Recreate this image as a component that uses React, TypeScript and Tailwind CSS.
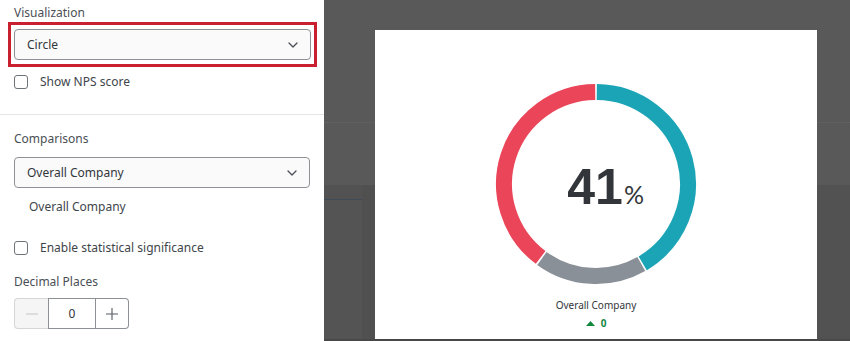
import React from "react";

const FONT = { fontFamily: '"Noto Sans", "Open Sans", Arial, sans-serif' };

function Chevron() {
  return (
    <svg width="10" height="6" viewBox="0 0 10 6" className="shrink-0">
      <path d="M1 1 L5 5 L9 1" fill="none" stroke="#4a4f55" strokeWidth="1.3" strokeLinecap="round" strokeLinejoin="round" />
    </svg>
  );
}

function Select({ value }: { value: string }) {
  return (
    <div className="flex h-[31px] items-center justify-between rounded-[4px] border border-[#8d9196] bg-[#fafafa] pl-[12px] pr-[12px]">
      <span className="text-[12px] text-[#32363a]">{value}</span>
      <Chevron />
    </div>
  );
}

function Checkbox({ label }: { label: string }) {
  return (
    <div className="flex h-[16px] items-center">
      <div className="h-[14px] w-[14px] rounded-[3px] border border-[#6e7378] bg-white" />
      <span className="ml-[12px] text-[12px] text-[#40454a]">{label}</span>
    </div>
  );
}

function arc(cx: number, cy: number, r: number, a0: number, a1: number) {
  const rad = (d: number) => (d * Math.PI) / 180;
  const x0 = cx + r * Math.sin(rad(a0));
  const y0 = cy - r * Math.cos(rad(a0));
  const x1 = cx + r * Math.sin(rad(a1));
  const y1 = cy - r * Math.cos(rad(a1));
  const large = a1 - a0 > 180 ? 1 : 0;
  return `M ${x0} ${y0} A ${r} ${r} 0 ${large} 1 ${x1} ${y1}`;
}

function Donut() {
  const cx = 110;
  const cy = 110;
  const r = 92;
  const segs = [
    { a0: 0.5, a1: 149.5, c: "#1ba4b6" },
    { a0: 150.5, a1: 216, c: "#8a9098" },
    { a0: 217, a1: 359.5, c: "#ea4559" },
  ];
  return (
    <svg width="220" height="220" viewBox="0 0 220 220">
      {segs.map((s, i) => (
        <path key={i} d={arc(cx, cy, r, s.a0, s.a1)} fill="none" stroke={s.c} strokeWidth="16" />
      ))}
      <text x={cx - 1} y={cy + 19.5} textAnchor="middle" style={{ fontFamily: '"Liberation Sans", Arial, sans-serif', fontWeight: 700, fontSize: 50 }} fill="#32363a">
        41
      </text>
      <text x={cx + 28} y={cy + 20} style={{ fontFamily: 'Lato, "Noto Sans", sans-serif', fontWeight: 400, fontSize: 25 }} fill="#32363a">
        %
      </text>
    </svg>
  );
}

export default function App() {
  return (
    <div className="flex h-[341px] w-[850px] overflow-hidden" style={FONT}>
      {/* Left panel */}
      <div className="flex h-full w-[324px] shrink-0 flex-col bg-white">
        <div className="px-[14px] pt-[4px]">
          <div className="h-[18px] text-[12px] leading-[18px] text-[#4a4f55]">Visualization</div>
        </div>
        <div className="ml-[8px] w-[309px] border-[3px] border-[#c8202f] px-[3px] py-[4px]">
          <Select value="Circle" />
        </div>
        <div className="mt-[7px] px-[14px]">
          <Checkbox label="Show NPS score" />
        </div>
        <div className="mt-[24px] h-px bg-[#e4e4e4]" />
        <div className="px-[14px]">
          <div className="mt-[15px] h-[18px] text-[12px] leading-[18px] text-[#4a4f55]">Comparisons</div>
          <div className="mt-[9px]">
            <Select value="Overall Company" />
          </div>
          <div className="mt-[10px] h-[18px] pl-[15px] text-[12px] leading-[18px] text-[#40454a]">Overall Company</div>
          <div className="mt-[24px]">
            <Checkbox label="Enable statistical significance" />
          </div>
          <div className="mt-[17px] h-[18px] text-[12px] leading-[18px] text-[#4a4f55]">Decimal Places</div>
          <div className="mt-[7px] flex h-[31px] w-[115px]">
            <div className="flex w-[34px] items-center justify-center rounded-l-[4px] border border-r-0 border-[#d6d6d6] bg-[#f5f5f5]">
              <svg width="12" height="2" viewBox="0 0 12 2"><path d="M0 1 H12" stroke="#c4c4c4" strokeWidth="1" /></svg>
            </div>
            <div className="flex w-[48px] items-center justify-center border border-[#8d9196] bg-white text-[12px] text-[#32363a]">0</div>
            <div className="flex w-[33px] items-center justify-center rounded-r-[4px] border border-l-0 border-[#8d9196] bg-white">
              <svg width="12" height="12" viewBox="0 0 12 12"><path d="M0 6 H12 M6 0 V12" stroke="#55595e" strokeWidth="1.1" /></svg>
            </div>
          </div>
        </div>
      </div>

      {/* Right dimmed area */}
      <div className="relative flex h-full flex-1 flex-col bg-[#525252]">
        <div className="h-[185px] shrink-0 bg-[#595959] pt-[122px]">
          <div className="border-t border-dotted border-[#676767]" />
        </div>
        <div className="flex flex-1">
          <div className="mt-[14px] h-full w-[38px] border-t border-[#3f4a57] bg-[#545454]" />
          <div className="h-full w-[13px] bg-[#505050]" />
          <div className="flex-1" />
        </div>
        <div className="h-[2px] bg-[#484848]" />

        {/* Preview card */}
        <div className="absolute left-[51px] top-[30px] flex h-[309px] w-[442px] flex-col items-center bg-white">
          <div className="mt-[44px]">
            <Donut />
          </div>
          <div className="mt-[4px] text-[10px] leading-[14px] text-[#32363a]">Overall Company</div>
          <div className="mt-[5px] flex items-center gap-[6px]">
            <svg width="9" height="5" viewBox="0 0 9 5"><path d="M0 5 L4.5 0 L9 5 Z" fill="#12883f" /></svg>
            <span className="text-[10px] font-bold leading-[12px] text-[#12883f]">0</span>
          </div>
        </div>
      </div>
    </div>
  );
}
